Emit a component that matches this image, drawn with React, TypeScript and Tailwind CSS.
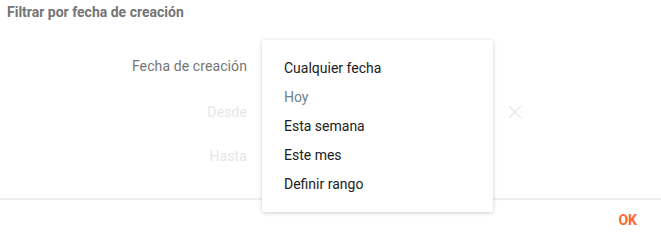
import React from "react";

export default function App() {
  const font = { fontFamily: "Roboto, 'Liberation Sans', sans-serif" };
  return (
    <div className="relative w-[661px] h-[241px] bg-white overflow-hidden" style={font}>
      <div className="h-[24px] flex items-center pl-[7px] text-[14px] font-bold text-[#757575]">
        Filtrar por fecha de creación
      </div>
      <div className="h-[174px] flex flex-col pt-[19px]">
        <div className="h-[46px] flex items-center">
          <div className="w-[247px] text-right text-[14px] tracking-[0.1px] text-[#757575]">Fecha de creación</div>
        </div>
        <div className="h-[46px] flex items-center">
          <div className="w-[247px] text-right text-[14px] tracking-[0.1px] text-[#e6e6e6]">Desde</div>
          <div className="ml-[261px] flex items-center">
            <svg width="14" height="14" viewBox="0 0 14 14" className="text-[#e8e8e8]">
              <path d="M1 1 L13 13 M13 1 L1 13" stroke="currentColor" strokeWidth="1.4" fill="none" />
            </svg>
          </div>
        </div>
        <div className="h-[42px] flex items-center">
          <div className="w-[247px] text-right text-[14px] tracking-[0.1px] text-[#e6e6e6]">Hasta</div>
        </div>
      </div>
      <div className="border-t-2 border-[#eeeeee] h-[43px] flex items-center justify-end pr-[24px]">
        <span className="text-[14px] font-bold text-[#ff6633]">OK</span>
      </div>

      <div className="absolute left-[262px] top-[40px] w-[231px] h-[172px] bg-white rounded-[2px] shadow-[0_1px_4px_rgba(0,0,0,0.2)] pt-[14px] flex flex-col">
        {[
          { t: "Cualquier fecha", c: "text-[#212121]" },
          { t: "Hoy", c: "text-[#6b8291]" },
          { t: "Esta semana", c: "text-[#212121]" },
          { t: "Este mes", c: "text-[#212121]" },
          { t: "Definir rango", c: "text-[#212121]" },
        ].map((it) => (
          <div key={it.t} className={`h-[29px] flex items-center pl-[22px] text-[14px] ${it.c}`}>
            {it.t}
          </div>
        ))}
      </div>
    </div>
  );
}
